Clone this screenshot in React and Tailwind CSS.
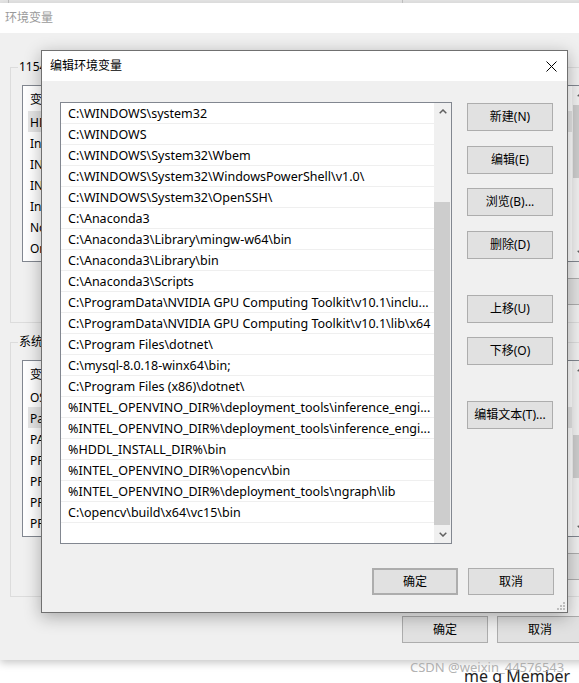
import React from "react";

const paths = [
  String.raw`C:\WINDOWS\system32`,
  String.raw`C:\WINDOWS`,
  String.raw`C:\WINDOWS\System32\Wbem`,
  String.raw`C:\WINDOWS\System32\WindowsPowerShell\v1.0\ `.trim(),
  String.raw`C:\WINDOWS\System32\OpenSSH\ `.trim(),
  String.raw`C:\Anaconda3`,
  String.raw`C:\Anaconda3\Library\mingw-w64\bin`,
  String.raw`C:\Anaconda3\Library\bin`,
  String.raw`C:\Anaconda3\Scripts`,
  String.raw`C:\ProgramData\NVIDIA GPU Computing Toolkit\v10.1\inclu...`,
  String.raw`C:\ProgramData\NVIDIA GPU Computing Toolkit\v10.1\lib\x64`,
  String.raw`C:\Program Files\dotnet\ `.trim(),
  String.raw`C:\mysql-8.0.18-winx64\bin;`,
  String.raw`C:\Program Files (x86)\dotnet\ `.trim(),
  String.raw`%INTEL_OPENVINO_DIR%\deployment_tools\inference_engi...`,
  String.raw`%INTEL_OPENVINO_DIR%\deployment_tools\inference_engi...`,
  String.raw`%HDDL_INSTALL_DIR%\bin`,
  String.raw`%INTEL_OPENVINO_DIR%\opencv\bin`,
  String.raw`%INTEL_OPENVINO_DIR%\deployment_tools\ngraph\lib`,
  String.raw`C:\opencv\build\x64\vc15\bin`,
];

const userVars = ["HDDL_INSTALL_DIR", "IntelliJ IDEA", "INTEL_CVSDK_DIR", "INTEL_OPENVINO_DIR", "InferenceEngine_DIR", "Nodejs", "OneDrive"];
const sysVars = ["OS", "Path", "PATHEXT", "PROCESSOR_ARCHITECTURE", "PROCESSOR_IDENTIFIER", "PROCESSOR_LEVEL", "PROCESSOR_REVISION"];

function Chevron({ dir = "up" }) {
  return (
    <svg width="8" height="5" viewBox="0 0 8 5">
      <polyline
        points={dir === "up" ? "0.7,4.3 4,1 7.3,4.3" : "0.7,0.7 4,4 7.3,0.7"}
        fill="none"
        stroke="#606060"
        strokeWidth="1.5"
      />
    </svg>
  );
}

function Btn({ children, className = "" }) {
  return (
    <div className={`flex items-center justify-center w-[86px] border border-[#adadad] bg-[#e1e1e1] text-[12px] text-black ${className}`}>
      {children}
    </div>
  );
}

function BgList({ items, hl, thumbClass }) {
  return (
    <div className="ml-[11px] mt-[17px] h-[177px] w-[568px] border border-[#828790] bg-white flex">
      <div className="flex-1 flex flex-col">
        <div className="h-[25px] flex items-center pl-[7px] pt-[2px]">
          <span className="w-[200px]">变量</span>
          <span>值</span>
        </div>
        {items.map((t, i) => (
          <div
            key={i}
            className={`h-[21px] flex items-center pt-[2px] ${i === hl ? "ml-[5px] pl-[2px] bg-[#e5e5e5]" : "pl-[7px]"}`}
          >
            {t}
          </div>
        ))}
      </div>
      <div className="w-[17px] flex flex-col bg-[#f0f0f0]">
        <div className="h-[17px] flex items-center justify-center">
          <Chevron />
        </div>
        <div className="flex-1">
          <div className={`mx-[1px] bg-[#cdcdcd] ${thumbClass}`} />
        </div>
        <div className="h-[17px] flex items-center justify-center">
          <Chevron dir="down" />
        </div>
      </div>
    </div>
  );
}

export default function App() {
  return (
    <div className="relative w-[579px] h-[683px] overflow-hidden bg-white text-[12px] text-black font-['Noto_Sans','Noto_Sans_CJK_SC',sans-serif]">
      {/* window behind, top strip */}
      <div className="h-[3px] bg-[#e6e6e6] flex">
        <div className="ml-[8px] w-px bg-[#bdbdbd]" />
        <div className="ml-[393px] w-px bg-[#bdbdbd]" />
      </div>

      {/* background window 环境变量 */}
      <div className="w-[612px] h-[657px] bg-[#f0f0f0] flex flex-col shadow-[0_3px_8px_rgba(0,0,0,0.22)]">
        <div className="h-[30px] bg-white flex items-center pl-[5px] text-[#9a9a9a]">环境变量</div>
        <div className="px-[10px] flex flex-col">
          <div className="relative mt-[34px] h-[256px] border border-[#dcdcdc]">
            <span className="absolute -top-[9px] left-[7px] bg-[#f0f0f0] px-[1px] leading-[16px]">11545的用户变量(U)</span>
            <BgList items={userVars} hl={0} thumbClass="mt-[2px] h-[73px]" />
            <div className="flex justify-end gap-[9px] pr-[11px] mt-[16px]">
              <Btn className="h-[27px]">新建(N)...</Btn>
              <Btn className="h-[27px]">编辑(E)...</Btn>
              <Btn className="h-[27px]">删除(D)</Btn>
            </div>
          </div>
          <div className="relative mt-[19px] h-[255px] border border-[#dcdcdc]">
            <span className="absolute -top-[9px] left-[7px] bg-[#f0f0f0] px-[1px] leading-[16px]">系统变量(S)</span>
            <BgList items={sysVars} hl={1} thumbClass="mt-[57px] h-[43px]" />
            <div className="flex justify-end gap-[9px] pr-[11px] mt-[16px]">
              <Btn className="h-[27px]">新建(W)...</Btn>
              <Btn className="h-[27px]">编辑(I)...</Btn>
              <Btn className="h-[27px]">删除(L)</Btn>
            </div>
          </div>
          <div className="flex justify-end gap-[9px] pr-[19px] mt-[19px]">
            <Btn className="h-[27px]">确定</Btn>
            <Btn className="h-[27px]">取消</Btn>
          </div>
        </div>
      </div>

      {/* page text below */}
      <div className="pl-[464px] pt-[8px] text-[16px] leading-none text-[#222] whitespace-nowrap">me g Member</div>

      {/* watermark */}
      <div className="absolute left-[410px] top-[659px] text-[13px] leading-[16px] text-[#a8a8a8]/90 whitespace-nowrap">
        CSDN @weixin_44576543
      </div>

      {/* dialog 编辑环境变量 */}
      <div className="absolute left-[41px] top-[50px] w-[527px] h-[563px] border border-[#707070] bg-[#f0f0f0] flex flex-col shadow-[0_4px_16px_rgba(0,0,0,0.3)]">
        <div className="h-[30px] bg-white flex items-center justify-between pl-[8px] pr-[10px]">
          <span>编辑环境变量</span>
          <svg width="11" height="11" viewBox="0 0 11 11">
            <path d="M0.5 0.5 L10.5 10.5 M10.5 0.5 L0.5 10.5" stroke="#000" strokeWidth="1" fill="none" />
          </svg>
        </div>
        <div className="relative flex-1 pt-[21px] pl-[18px] pr-[13px] flex flex-col">
          <div className="flex">
            <div className="w-[392px] h-[442px] border border-[#828790] bg-white flex">
              <div className="flex-1 flex flex-col">
                {paths.map((p, i) => (
                  <div key={i} className="h-[21px] border-b border-[#efefef] flex items-center pl-[7px] pt-[3px] text-[12.5px] whitespace-nowrap overflow-hidden">
                    {p}
                  </div>
                ))}
              </div>
              <div className="w-[17px] flex flex-col bg-[#f0f0f0]">
                <div className="h-[17px] flex items-center justify-center">
                  <Chevron />
                </div>
                <div className="flex-1">
                  <div className="mt-[82px] h-[323px] mr-[1px] bg-[#cdcdcd]" />
                </div>
                <div className="h-[17px] flex items-center justify-center">
                  <Chevron dir="down" />
                </div>
              </div>
            </div>
            <div className="ml-[15px] flex flex-col">
              <Btn className="mt-px h-[28px]">新建(N)</Btn>
              <Btn className="mt-[15px] h-[28px]">编辑(E)</Btn>
              <Btn className="mt-[14px] h-[28px]">浏览(B)...</Btn>
              <Btn className="mt-[15px] h-[28px]">删除(D)</Btn>
              <Btn className="mt-[36px] h-[28px]">上移(U)</Btn>
              <Btn className="mt-[14px] h-[28px]">下移(O)</Btn>
              <Btn className="mt-[36px] h-[28px]">编辑文本(T)...</Btn>
            </div>
          </div>
          <div className="flex justify-end gap-[10px] mt-[24px]">
            <Btn className="h-[27px] border-2 border-[#0078d7]">确定</Btn>
            <Btn className="h-[27px]">取消</Btn>
          </div>
          {/* resize grip */}
          <svg className="absolute right-[2px] bottom-[2px]" width="8" height="8" viewBox="0 0 8 8">
            <rect x="6" y="0" width="2" height="2" fill="#bdbdbd" />
            <rect x="3" y="3" width="2" height="2" fill="#bdbdbd" />
            <rect x="6" y="3" width="2" height="2" fill="#bdbdbd" />
            <rect x="0" y="6" width="2" height="2" fill="#bdbdbd" />
            <rect x="3" y="6" width="2" height="2" fill="#bdbdbd" />
            <rect x="6" y="6" width="2" height="2" fill="#bdbdbd" />
          </svg>
        </div>
      </div>
    </div>
  );
}
